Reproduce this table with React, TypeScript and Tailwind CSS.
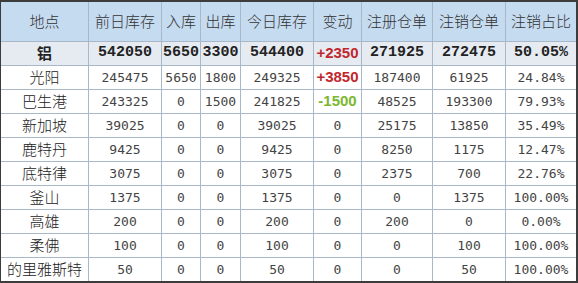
import React from "react";

type Row = {
  name: string;
  prev: string;
  inQty: string;
  outQty: string;
  today: string;
  change: string;
  reg: string;
  cancel: string;
  ratio: string;
};

const HEADERS = ["地点", "前日库存", "入库", "出库", "今日库存", "变动", "注册仓单", "注销仓单", "注销占比"];

const TOTAL: Row = {
  name: "铝",
  prev: "542050",
  inQty: "5650",
  outQty: "3300",
  today: "544400",
  change: "+2350",
  reg: "271925",
  cancel: "272475",
  ratio: "50.05%",
};

const ROWS: Row[] = [
  { name: "光阳", prev: "245475", inQty: "5650", outQty: "1800", today: "249325", change: "+3850", reg: "187400", cancel: "61925", ratio: "24.84%" },
  { name: "巴生港", prev: "243325", inQty: "0", outQty: "1500", today: "241825", change: "-1500", reg: "48525", cancel: "193300", ratio: "79.93%" },
  { name: "新加坡", prev: "39025", inQty: "0", outQty: "0", today: "39025", change: "0", reg: "25175", cancel: "13850", ratio: "35.49%" },
  { name: "鹿特丹", prev: "9425", inQty: "0", outQty: "0", today: "9425", change: "0", reg: "8250", cancel: "1175", ratio: "12.47%" },
  { name: "底特律", prev: "3075", inQty: "0", outQty: "0", today: "3075", change: "0", reg: "2375", cancel: "700", ratio: "22.76%" },
  { name: "釜山", prev: "1375", inQty: "0", outQty: "0", today: "1375", change: "0", reg: "0", cancel: "1375", ratio: "100.00%" },
  { name: "高雄", prev: "200", inQty: "0", outQty: "0", today: "200", change: "0", reg: "200", cancel: "0", ratio: "0.00%" },
  { name: "柔佛", prev: "100", inQty: "0", outQty: "0", today: "100", change: "0", reg: "0", cancel: "100", ratio: "100.00%" },
  { name: "的里雅斯特", prev: "50", inQty: "0", outQty: "0", today: "50", change: "0", reg: "0", cancel: "50", ratio: "100.00%" },
];

const CJK = "font-['Noto_Sans_CJK_SC',sans-serif] font-light";
const MONO = "font-['DejaVu_Sans_Mono','Noto_Sans_CJK_SC',monospace]";
const BOLD_MONO = "font-['Liberation_Mono','Noto_Sans_CJK_SC',monospace] font-bold";

function cell(col: number, last: boolean) {
  return [
    "flex items-center justify-center overflow-hidden whitespace-nowrap border-[#a9b8c8]",
    col < 8 ? "border-r" : "",
    last ? "" : "border-b",
  ].join(" ");
}

function ChangeText({ v, bold }: { v: string; bold?: boolean }) {
  if (v.startsWith("+"))
    return <span className="font-['Liberation_Sans',sans-serif] text-[15px] font-bold text-[#c1272d]">{v}</span>;
  if (v.startsWith("-"))
    return <span className="font-['Liberation_Sans',sans-serif] text-[15px] font-bold text-[#7cb82f]">{v}</span>;
  return <span className={bold ? BOLD_MONO : MONO}>{v}</span>;
}

function DataRow({ r, total, last }: { r: Row; total?: boolean; last?: boolean }) {
  const h = last ? "h-[23px]" : "h-6";
  const bg = total ? "bg-[#e6ebf2]" : "bg-white";
  const num = total ? `${BOLD_MONO} text-[15px] text-[#222]` : `${MONO} text-[13px] text-[#444]`;
  const vals = [r.prev, r.inQty, r.outQty, r.today];
  const tail = [r.reg, r.cancel, r.ratio];
  return (
    <>
      <div
        className={`${cell(0, !!last)} ${h} ${bg} font-['Noto_Sans_CJK_SC',sans-serif] text-[15px] text-[#222] ${total ? "font-bold" : "font-light"}`}
      >
        {r.name}
      </div>
      {vals.map((v, i) => (
        <div key={i} className={`${cell(i + 1, !!last)} ${h} ${bg} ${num}`}>
          {v}
        </div>
      ))}
      <div className={`${cell(5, !!last)} ${h} ${bg} ${total ? "text-[15px]" : "text-[13px] text-[#444]"}`}>
        <ChangeText v={r.change} bold={total} />
      </div>
      {tail.map((v, i) => (
        <div key={i} className={`${cell(i + 6, !!last)} ${h} ${bg} ${num}`}>
          {v}
        </div>
      ))}
    </>
  );
}

export default function App() {
  return (
    <div className="h-[283px] w-[578px] border-b-2 border-l border-r-2 border-t-2 border-[#3c3c3c] bg-white">
      <div className="grid grid-cols-[88px_73px_39px_40px_73px_48px_71px_73px_70px]">
        {HEADERS.map((h, i) => (
          <div
            key={h}
            className={`${cell(i, false)} h-10 bg-[#c5dbf0] ${CJK} text-[15px] text-[#333]`}
          >
            {h}
          </div>
        ))}
        <DataRow r={TOTAL} total />
        {ROWS.map((r, i) => (
          <DataRow key={r.name} r={r} last={i === ROWS.length - 1} />
        ))}
      </div>
    </div>
  );
}
